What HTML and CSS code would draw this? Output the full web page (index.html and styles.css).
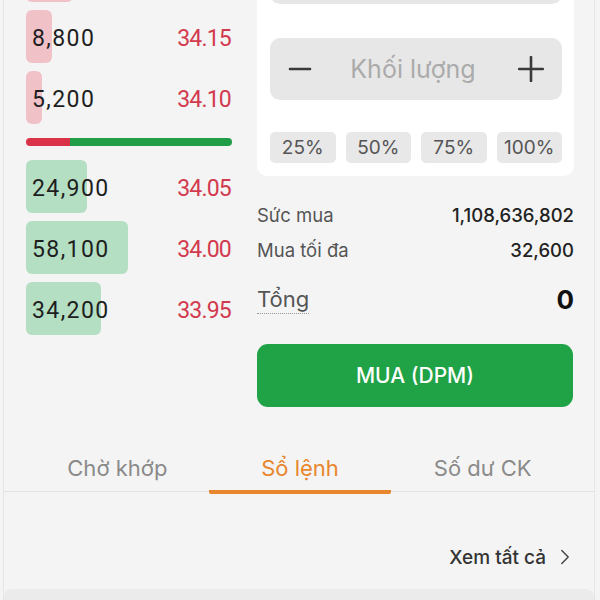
FILE: index.html
```html
<!DOCTYPE html>
<html lang="vi">
<head>
<meta charset="utf-8">
<link rel="stylesheet" href="styles.css">
</head>
<body>
<div class="screen">
  <div class="top">
    <div class="book">
      <div class="row ask"><span class="bar" style="width:47px"></span></div>
      <div class="row ask"><span class="bar" style="width:26px"></span><span class="qty">8,800</span><span class="price">34.15</span></div>
      <div class="row ask"><span class="bar" style="width:16px"></span><span class="qty">5,200</span><span class="price">34.10</span></div>
      <div class="split"><span class="split-red"></span><span class="split-green"></span></div>
      <div class="row bid"><span class="bar" style="width:61px"></span><span class="qty">24,900</span><span class="price">34.05</span></div>
      <div class="row bid"><span class="bar" style="width:102px"></span><span class="qty">58,100</span><span class="price">34.00</span></div>
      <div class="row bid"><span class="bar" style="width:75px"></span><span class="qty">34,200</span><span class="price">33.95</span></div>
    </div>
    <div class="panel">
      <div class="card">
        <div class="field"></div>
        <div class="field qty-field">
          <svg class="ico" viewBox="0 0 24 24" width="24" height="24"><path d="M2 12h20" stroke="#3a3a3a" stroke-width="2.6" stroke-linecap="round"/></svg>
          <span class="placeholder">Khối lượng</span>
          <svg class="ico" viewBox="0 0 24 24" width="26" height="26"><path d="M1 12h22M12 1v22" stroke="#3a3a3a" stroke-width="2.4" stroke-linecap="round"/></svg>
        </div>
        <div class="pcts">
          <span class="pct">25%</span><span class="pct">50%</span><span class="pct">75%</span><span class="pct">100%</span>
        </div>
      </div>
      <div class="info">
        <div class="info-row"><span class="lbl">Sức mua</span><span class="val">1,108,636,802</span></div>
        <div class="info-row"><span class="lbl">Mua tối đa</span><span class="val">32,600</span></div>
        <div class="info-row total"><span class="lbl dotted">Tổng</span><span class="val big">0</span></div>
      </div>
      <button class="buy">MUA (DPM)</button>
    </div>
  </div>
  <div class="tabs">
    <div class="tab">Chờ khớp</div>
    <div class="tab active">Sổ lệnh</div>
    <div class="tab">Số dư CK</div>
  </div>
  <div class="more">
    <span>Xem tất cả</span>
    <svg viewBox="0 0 12 20" width="10" height="16"><path d="M2 2l8 8-8 8" fill="none" stroke="#444" stroke-width="1.8" stroke-linecap="round" stroke-linejoin="round"/></svg>
  </div>
  <div class="next-card"></div>
</div>
</body>
</html>
```
FILE: styles.css
```css
html, body {
  margin: 0;
  padding: 0;
  background: #f4f4f4;
  overflow: hidden;
  height: 600px;
}
body {
  font-family: "Inter", "Noto Sans", sans-serif;
  color: #222;
}
.screen {
  margin: 0 5px 0 3px;
  border-left: 1px solid #e6e6e6;
  border-right: 1px solid #e6e6e6;
  height: 600px;
  overflow: hidden;
}
.top {
  display: flex;
  margin-top: -70px;
  padding: 0 19px 0 22px;
}
.book {
  width: 206px;
  padding-top: 19px;
  display: flex;
  flex-direction: column;
  gap: 8px;
  font-family: "Roboto", "Noto Sans", sans-serif;
}
.row {
  position: relative;
  height: 53px;
  box-sizing: border-box;
  padding-top: 4px;
  display: flex;
  align-items: center;
  justify-content: space-between;
  font-size: 23px;
}
.bar {
  position: absolute;
  left: 0;
  top: 0;
  bottom: 0;
  border-radius: 6px;
}
.ask .bar { background: #f1c1c8; }
.bid .bar { background: #b4dfc3; }
.qty {
  position: relative;
  padding-left: 6px;
  color: #1e1e1e;
  letter-spacing: 1.4px;
}
.price {
  position: relative;
  color: #d23a4e;
  padding-right: 1px;
  letter-spacing: -0.8px;
}
.split {
  display: flex;
  height: 8px;
  margin: 6px 0;
  border-radius: 4px;
  overflow: hidden;
}
.split-red { width: 44px; background: #da3349; }
.split-green { flex: 1; background: #1f9e47; }
.panel {
  width: 317px;
  margin-left: 25px;
}
.card {
  background: #fff;
  border-radius: 10px;
  padding: 12px 12px 13px 13px;
}
.field {
  height: 62px;
  background: #e7e7e7;
  border-radius: 10px;
}
.qty-field {
  margin-top: 34px;
  display: flex;
  align-items: center;
  justify-content: space-between;
  padding: 0 18px;
}
.placeholder {
  font-size: 25px;
  color: #ababab;
  margin-left: -4px;
}
.pcts {
  display: flex;
  gap: 10px;
  margin-top: 32px;
}
.pct {
  flex: 1;
  height: 31px;
  line-height: 31px;
  text-align: center;
  background: #e8e8e8;
  border-radius: 5px;
  font-size: 19px;
  color: #555;
}
.info {
  margin-top: 25px;
}
.info-row {
  display: flex;
  justify-content: space-between;
  align-items: center;
  height: 28px;
  margin-bottom: 7px;
  font-size: 18.5px;
}
.info-row.total {
  height: 36px;
  margin-top: 17px;
  margin-bottom: 0;
}
.lbl { color: #555; }
.val { color: #222; font-weight: 500; }
.total .lbl {
  font-size: 22px;
}
.dotted {
  border-bottom: 1.5px dotted #999;
  line-height: 28px;
}
.big {
  font-size: 26px;
  font-weight: 700;
  color: #111;
}
.buy {
  display: block;
  width: 316px;
  height: 63px;
  margin-top: 27px;
  border: none;
  border-radius: 11px;
  background: #20a246;
  color: #fff;
  font-family: "Inter", "Noto Sans", sans-serif;
  font-size: 21px;
  font-weight: 500;
}
.tabs {
  display: flex;
  margin-top: 34px;
  padding: 0 20px 0 22px;
  border-bottom: 1px solid #e1e1e1;
}
.tab {
  flex: 1;
  text-align: center;
  font-size: 22px;
  line-height: 28px;
  padding: 13px 0 8px;
  color: #8a8a8a;
  border-bottom: 4px solid transparent;
  margin-bottom: -3px;
  border-radius: 0 0 2px 2px;
}
.tab.active {
  color: #e8862d;
  border-bottom-color: #e8862d;
}
.more {
  display: flex;
  justify-content: flex-end;
  align-items: center;
  gap: 14px;
  margin-top: 52px;
  padding-right: 24px;
  font-size: 19px;
  font-weight: 500;
  color: #333;
  height: 26px;
}
.next-card {
  margin-top: 19px;
  height: 40px;
  background: #ebebeb;
  border-radius: 8px 8px 0 0;
}
```
